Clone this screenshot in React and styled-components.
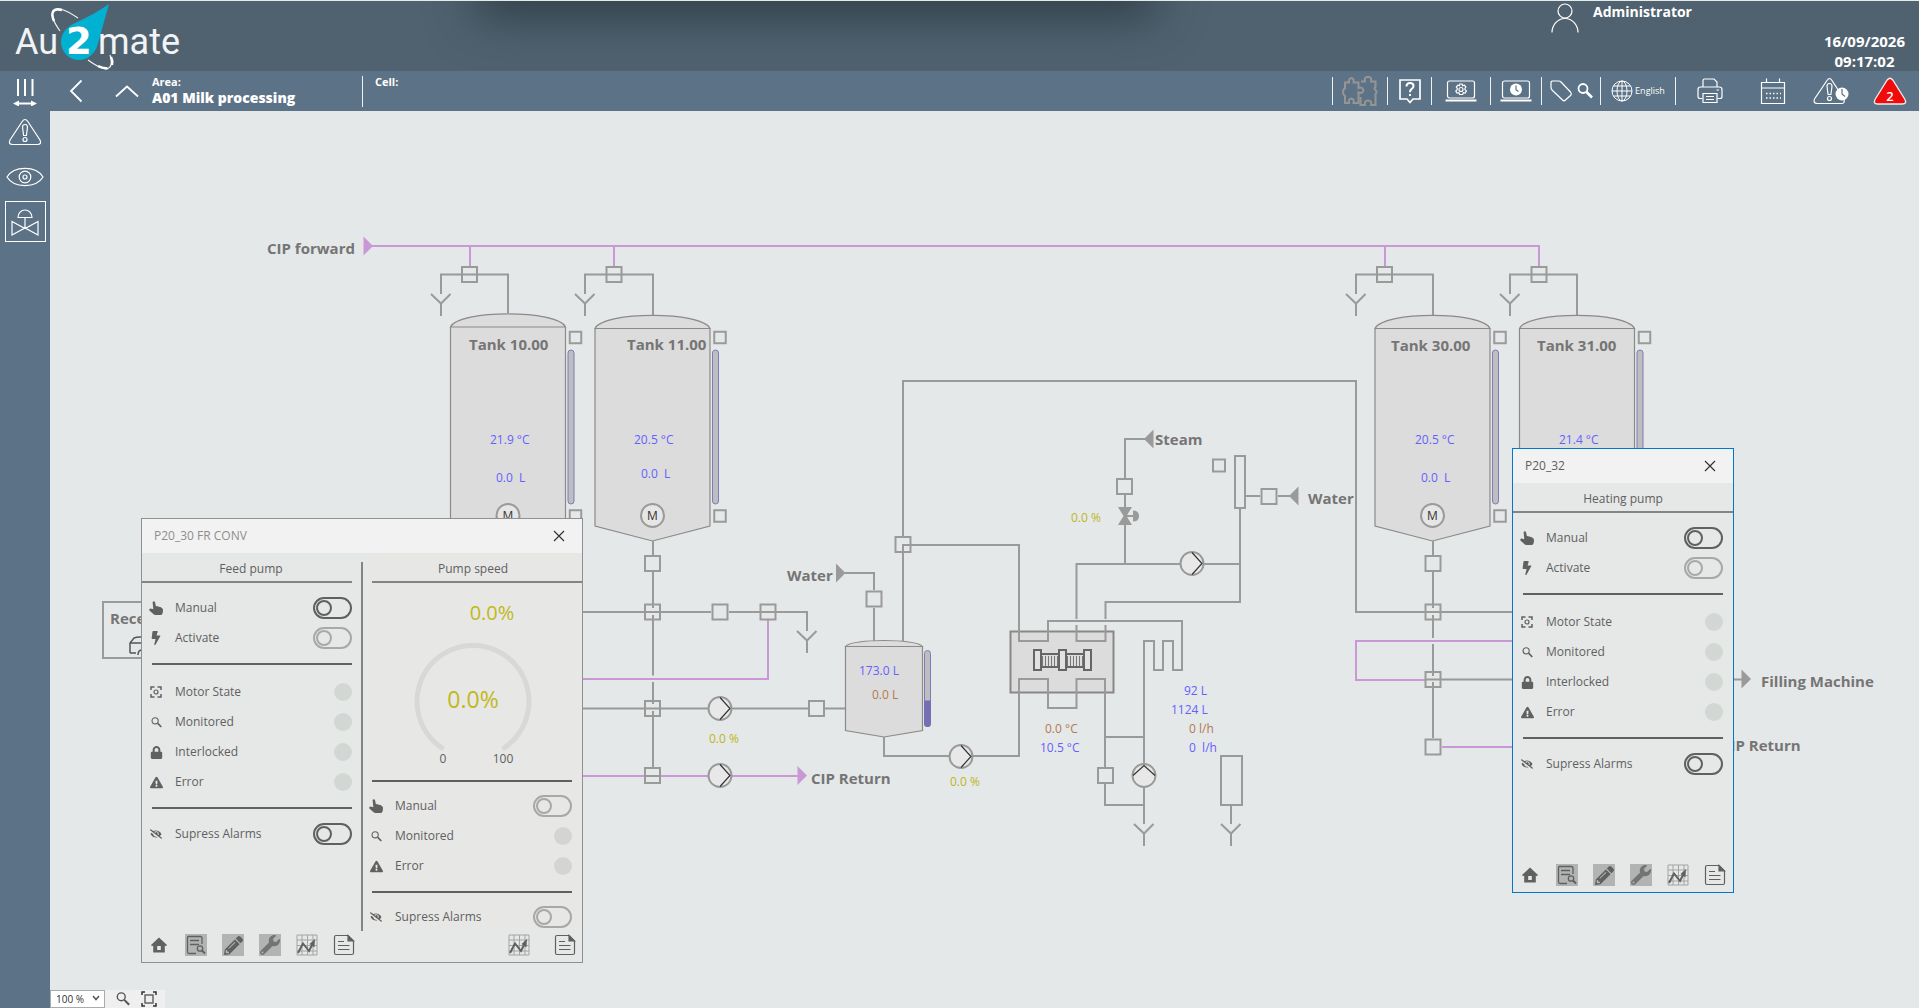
import React from "react";
import styled, { createGlobalStyle } from "styled-components";
import {
  FaBolt,
  FaLock,
  FaExclamationTriangle,
  FaPencilAlt,
  FaWrench,
  FaEyeSlash,
} from "react-icons/fa";

const FONT = '"Open Sans", "Noto Sans", "Liberation Sans", sans-serif';
const C = {
  header: "#50626f",
  bar: "#5c7286",
  canvas: "#e5e8e8",
  panel: "#e6e8e7",
  pipe: "#9a9a9a",
  box: "#9a9b98",
  cip: "#cb98d6",
  vessel: "#dcdcdc",
  edge: "#8a8a8a",
  label: "#757575",
  ink: "#606060",
  faint: "#a8a8a8",
  blue: "#6660ff",
  brown: "#b37a50",
  yellow: "#bdb61c",
};

const Global = createGlobalStyle`
  *, *::before, *::after { box-sizing: border-box; }
  body { margin: 0; font-family: ${FONT}; background: ${C.canvas}; }
  button, select, input { font-family: inherit; margin: 0; }
`;

/* ---------- page frame ---------- */

const Page = styled.div`
  display: grid;
  grid-template-columns: 50px minmax(0, 1fr);
  grid-template-rows: 71px 40px minmax(0, 1fr);
  height: 100vh;
  overflow: hidden;
  background: ${C.bar};
`;

const Header = styled.header`
  grid-column: 1 / -1;
  position: relative;
  display: flex;
  overflow: hidden;
  background: ${C.header};
  border-top: 1px solid #e4ebe9;
  color: #fff;
  font-weight: 700;
  &::before {
    content: "";
    position: absolute;
    left: 25%;
    right: 40%;
    top: -40px;
    height: 40px;
    box-shadow: 0 10px 48px 4px rgba(30, 44, 52, 0.7);
  }
`;

const Logo = styled.svg`
  flex: none;
  position: relative;
  font-weight: 400;
`;

const User = styled.div`
  display: flex;
  align-items: flex-start;
  gap: 14px;
  margin-left: auto;
  padding-right: 132px;
  font-size: 14px;
  line-height: 22px;
  svg {
    margin-top: 2px;
  }
`;

const Clock = styled.time`
  align-self: flex-end;
  padding: 0 14px 0 0;
  text-align: center;
  font-size: 15px;
  line-height: 20px;
  span {
    display: block;
  }
`;

const Bar = styled.div`
  display: flex;
  align-items: stretch;
  color: #fff;
`;

const BareButton = styled.button`
  display: flex;
  align-items: center;
  justify-content: center;
  width: ${(p) => p.$w || 40}px;
  height: ${(p) => (p.$h ? p.$h + "px" : "auto")};
  padding: 0;
  border: 0;
  background: none;
  color: ${(p) => p.$c || "#fff"};
  font-size: 9px;
  line-height: 12px;
  gap: ${(p) => p.$gap || 0}px;
`;

const Crumb = styled.div`
  display: flex;
  flex-direction: column;
  width: ${(p) => p.$w}px;
  padding-top: 3px;
  font-weight: 700;
  small {
    font-size: 11px;
    line-height: 16px;
  }
  strong {
    font-size: 14px;
    line-height: 16px;
  }
`;

const Rule = styled.span`
  width: 1px;
  margin: 6px 0;
  background: #eef2f4;
`;

const CrumbRule = styled(Rule)`
  margin: 5px 12px 4px 0;
`;

const Tools = styled.div`
  display: flex;
  margin-left: auto;
`;

const Side = styled.nav`
  display: flex;
  flex-direction: column;
  align-items: center;
  gap: 4px;
  background: ${C.bar};
`;

const SideButton = styled(BareButton)`
  width: 41px;
  height: 41px;
  border: 1px solid ${(p) => (p.$on ? "#fff" : "transparent")};
`;

const Main = styled.main`
  display: flex;
  flex-direction: column;
  min-width: 0;
  background: ${C.canvas};
`;

const Canvas = styled.section`
  position: relative;
  flex: 1;
  overflow: hidden;
`;

const Drawing = styled.svg`
  position: absolute;
  left: 0;
  top: 0;
`;

const Tag = styled.span`
  position: absolute;
  left: ${(p) => p.$x - 50}px;
  top: ${(p) => p.$y - 111 - 10}px;
  line-height: 20px;
  white-space: pre;
  color: ${(p) => p.$c};
  font-size: ${(p) => p.$s}px;
  font-weight: ${(p) => (p.$b ? 700 : 400)};
`;

const ZoomBar = styled.div`
  display: flex;
  align-items: center;
  gap: 10px;
  align-self: flex-start;
  height: 18px;
  padding-right: 8px;
  background: #efefef;
`;

const ZoomPick = styled.div`
  position: relative;
  display: flex;
  width: 55px;
  height: 18px;
  select {
    width: 100%;
    padding: 0 0 0 5px;
    border: 1px solid #ababab;
    background: #fff;
    color: #333;
    font-size: 10px;
    line-height: 14px;
    appearance: none;
  }
  svg {
    position: absolute;
    right: 5px;
    top: 4px;
    color: #555;
    pointer-events: none;
  }
`;

/* ---------- faceplate windows ---------- */

const Window = styled.section`
  position: absolute;
  left: ${(p) => p.$x - 50}px;
  top: ${(p) => p.$y - 111}px;
  width: ${(p) => p.$w}px;
  display: flex;
  flex-direction: column;
  background: ${C.panel};
  border: 1px solid ${(p) => (p.$active ? "#0078d0" : "#8f908f")};
  color: ${C.ink};
  font-size: 12px;
  line-height: 18px;
`;

const TitleBar = styled.header`
  display: flex;
  align-items: center;
  justify-content: space-between;
  height: 34px;
  padding: 0 12px;
  background: #f2f2f2;
  color: ${(p) => (p.$active ? "#5f5f5f" : "#8e8e8e")};
  h2 {
    margin: 0;
    font-size: 12px;
    font-weight: 400;
  }
`;

const Body = styled.div`
  display: flex;
  height: 379px;
`;

const Column = styled.div`
  flex: ${(p) => (p.$w ? `none` : `1`)};
  width: ${(p) => (p.$w ? p.$w + "px" : "auto")};
  display: flex;
  flex-direction: column;
  background: ${(p) => (p.$warm ? "#e7e7e6" : "transparent")};
`;

const Split = styled.div`
  width: 2px;
  margin: 9px 6px 1px 9px;
  background: #828583;
`;

const Heading = styled.h3`
  flex: none;
  margin: 0 0 0 ${(p) => p.$left || 0}px;
  height: 30px;
  padding: 7px ${(p) => (p.$pull === "left" ? 8 : 0)}px 0 ${(p) => (p.$pull === "right" ? 8 : 0)}px;
  border-bottom: 2px solid #828583;
  text-align: center;
  font-size: 12px;
  font-weight: 400;
`;

const Rows = styled.div`
  flex: none;
  display: flex;
  flex-direction: column;
  margin-right: ${(p) => p.$right || 0}px;
  padding: ${(p) => p.$top || 10}px 0 10px;
  &:last-child {
    padding-bottom: 0;
  }
`;

const Cut = styled.hr`
  flex: none;
  height: 2px;
  margin: 0 ${(p) => p.$right || 0}px 0 ${(p) => p.$left}px;
  border: 0;
  background: ${C.ink};
`;

const Row = styled.label`
  display: grid;
  grid-template-columns: 14px 1fr auto;
  align-items: center;
  column-gap: 12px;
  height: 30px;
  padding-left: ${(p) => p.$left}px;
  & > svg {
    justify-self: center;
  }
`;

const Toggle = styled.input.attrs({ type: "checkbox" })`
  appearance: none;
  position: relative;
  width: 39px;
  height: 22px;
  border: 2px solid currentColor;
  border-radius: 11px;
  color: ${(p) => (p.disabled ? C.faint : C.ink)};
  &::before {
    content: "";
    position: absolute;
    left: 1px;
    top: 1px;
    width: 16px;
    height: 16px;
    border: 2px solid currentColor;
    border-radius: 50%;
  }
`;

const Led = styled.output`
  width: 18px;
  height: 18px;
  border-radius: 50%;
  background: ${(p) => (p.$warm ? "#d4d4d4" : "#d2d7d4")};
`;

const Readout = styled.output`
  flex: none;
  display: flex;
  align-items: center;
  justify-content: center;
  height: 60px;
  padding-left: 33px;
  color: #c0b91a;
  font-size: 20px;
  line-height: 28px;
`;

const GaugeBox = styled.svg`
  flex: none;
  align-self: center;
  margin: 0 5px 10px 0;
`;

const Foot = styled.footer`
  display: flex;
  justify-content: space-between;
  height: 30px;
  padding: 2px 6px 0;
`;

const FootGroup = styled.div`
  display: flex;
  gap: ${(p) => p.$gap}px;
`;

const FootButton = styled.button`
  display: flex;
  align-items: center;
  justify-content: center;
  width: 22px;
  height: 22px;
  padding: 0;
  border: 0;
  background: ${(p) => (p.$shade ? "#b2b4b3" : "none")};
  color: ${(p) => p.$c || C.ink};
`;

/* ---------- icons ---------- */

const Ico = ({ w, h, sw = 1.4, children, ...rest }) => (
  <svg width={w} height={h} viewBox={`0 0 ${w} ${h}`} fill="none" stroke="currentColor" strokeWidth={sw} {...rest}>
    {children}
  </svg>
);

const MenuIcon = () => (
  <Ico w={26} h={30} sw={2}>
    <path d="M6 3v17M13 3v17M20.500 3v17" />
    <path d="M5 27.500h16" />
    <path d="M1 27.500l6-3v6zM25 27.500l-6-3v6z" fill="currentColor" stroke="none" />
  </Ico>
);
const WarnIcon = () => (
  <Ico w={34} h={28} sw={1.2}>
    <path d="M14.200 3.500Q17 -.5 19.800 3.500L32 22Q34 26.500 29.500 26.500H4.500Q0 26.500 2 22Z" />
    <path d="M17 6.500c-2 0-2.700 1.500-2.400 3.500l1 7.500h2.800l1-7.500c.3-2-.4-3.500-2.400-3.500z" />
    <circle cx="17" cy="21.500" r="2" />
  </Ico>
);
const EyeIcon = () => (
  <Ico w={38} h={22} sw={1.2}>
    <path d="M1 11C8 -.5 30 -.5 37 11C30 22.500 8 22.500 1 11Z" />
    <circle cx="19" cy="11" r="5.800" />
    <circle cx="19" cy="11" r="2" />
  </Ico>
);
const ValveIcon = () => (
  <Ico w={28} h={28} sw={1.2}>
    <path d="M7 9.500a7 7.500 0 0 1 14 0zM14 9.500v10M1 13.500v13.500l13-7 13 7V13.500l-13 7z" />
  </Ico>
);
const PersonIcon = () => (
  <Ico w={28} h={30} sw={1.2}>
    <circle cx="14" cy="8" r="7" />
    <path d="M1 29.500a13 14 0 0 1 26 0" />
  </Ico>
);
const PuzzleIcon = () => (
  <Ico w={36} h={30} sw={2} color="#979593">
    <path d="M3 6.500H7q-1-4 2.500-4.500 3 .5 2 4.500h5v5.500q4-1.500 5 2.500-1 3.500-5 2V27h-5q1-4-2-4.500-3.500.5-2.500 4.500H3v-7q-2-1-2-4 0-3 2-3.500z" />
    <path d="M19 5.500h4Q22 1 26 .8 30 1 29 5.500h4.500V11q-2 1.500 0 3 2 2 0 4V29H29q1-4.500-3-4.500T23 29h-4.500v-8" />
  </Ico>
);
const HelpIcon = () => (
  <Ico w={24} h={26} sw={1.700}>
    <path d="M2 2h20v19h-7l-3 3.500L9 21H2z" />
    <path d="M8.500 8.500q0-3.500 3.500-3.500t3.500 3q0 2-2 3.200-1.500 1-1.500 3M12 16v2" strokeWidth="2" />
  </Ico>
);
const LaptopIcon = ({ kind }) => (
  <Ico w={32} h={24} sw={1.200}>
    <rect x="2.500" y="2" width="27" height="17" rx="2" />
    <path d="M.5 21.500h31" strokeWidth="2" />
    {kind === "gear" ? (
      <g>
        <circle cx="16" cy="10.500" r="2" />
        <path d="M14.800 5h2.400l.5 1.700 1.700-.6 1.500 2-1 1.400.2 1.300 1.300 1.200-1.300 2-1.800-.4-.6 1.900h-3.200l-.6-1.900-1.800.4-1.300-2 1.300-1.200.2-1.300-1-1.400 1.500-2 1.700.6z" />
      </g>
    ) : (
      <g>
        <circle cx="16" cy="10.500" r="6" fill="currentColor" stroke="none" />
        <path d="M16 6.500v4.300l2.500 1.700" stroke={C.bar} />
      </g>
    )}
  </Ico>
);
const TagIcon = () => (
  <Ico w={22} h={22} sw={1.200}>
    <path d="M2 1h6.500q1.500 0 2.500 1l9.500 10q1.500 2 0 3.500l-5 4.500q-1.500 1.500-3 0L2.500 10.500Q1 9 1 7.500V2z" />
  </Ico>
);
const LensIcon = ({ s = 16, sw = 1.8 }) => (
  <svg width={s} height={s} viewBox="0 0 16 16" fill="none" stroke="currentColor" strokeWidth={sw}>
    <circle cx="6" cy="5.500" r="4.500" />
    <path d="M9.500 9l5.500 5.500" strokeWidth={sw + 0.8} />
  </svg>
);
const GlobeIcon = () => (
  <Ico w={22} h={22} sw={1}>
    <circle cx="11" cy="11" r="10" />
    <ellipse cx="11" cy="11" rx="5" ry="10" />
    <path d="M11 1v20M1 11h20M2.500 6h17M2.500 16h17" />
  </Ico>
);
const PrinterIcon = () => (
  <Ico w={26} h={26} sw={1.200}>
    <path d="M6 9V2.500Q6 1 7.500 1h9.500l3 3v5M5.500 20.500H3Q1 20.500 1 18.500v-7Q1 9 3.500 9h19Q25 9 25 11.500v7q0 2-2 2h-2.500" />
    <path d="M6 15.500h14v9H6zM9 18.500h8M9 21.500h8M19.500 12h2.500" />
  </Ico>
);
const CalendarIcon = () => (
  <Ico w={26} h={28} sw={1.200}>
    <path d="M1.500 5.500h23v21h-23zM1.500 11h23M6.500 1.500v4M19.500 1.500v4" />
    <path d="M6 16.500h15M6 21h15" strokeDasharray="1.500 2" strokeWidth="1.500" />
  </Ico>
);
const WarnClockIcon = () => (
  <Ico w={36} h={28} sw={1.2}>
    <path d="M14 3.500Q16.500-.5 19 3.500L31 22q1 4.500-2 4.500H4Q0 26.500 1.500 22z" />
    <path d="M16.500 6.500c-2 0-2.700 1.500-2.400 3.500l1 7.500h2.800l1-7.500c.3-2-.4-3.500-2.400-3.500z" />
    <circle cx="16.500" cy="21.500" r="2" />
    <circle cx="29" cy="17" r="6.500" fill="#fff" stroke="none" />
    <path d="M29 12v5l3 2.500" stroke={C.bar} />
  </Ico>
);
const AlarmCountIcon = () => (
  <svg width="34" height="28" viewBox="0 0 34 28">
    <path d="M14.200 3Q17-.5 19.800 3L32 22.500Q34 27 29.500 27H4.500Q0 27 2 22.500Z" fill="#f00a0a" stroke="#e8eef0" strokeWidth="1.300" />
    <text x="17" y="23.500" textAnchor="middle" fill="#fff" fontSize="13" fontWeight="600" fontFamily={FONT}>2</text>
  </svg>
);

const HandIcon = () => (
  <svg width="14" height="14" viewBox="0 0 14 14" fill="currentColor">
    <path d="M3.600.9Q5-.4 6 1l.9 4.300q1.100-.7 1.900.3 1.200-.5 1.900.5 1.300-.3 1.900.8l1.200.9q.5 3-.4 5Q12.900 14 11.500 14H6.500Q5.200 14 4.300 13L.4 9.500Q-.3 8 1.500 7.600l2.800.7z" />
  </svg>
);
const HomeIcon = () => (
  <svg width="16" height="16" viewBox="0 0 16 16" fill="currentColor">
    <path fillRule="evenodd" d="M8 .5L16 8l-1 1.200-1.200-.7V15.500H2.200V8.500L1 9.200 0 8zM6.200 9v4h3.600V9z" />
  </svg>
);
const StateIcon = () => (
  <Ico w={12} h={12} sw={1.5}>
    <path d="M1 4V1h3.500M7.500 1H11v3M11 8v3H7.500M4.500 11H1V8" />
    <circle cx="6" cy="6" r="2" strokeWidth="1.200" />
  </Ico>
);
const ListIcon = () => (
  <Ico w={20} h={20} sw={1.300}>
    <path d="M16 9V3q0-1.500-1.500-1.500h-12Q1.500 1.500 1.500 3v14q0 1.500 1.500 1.500h7M4 5.500h9M4 9.500h9" />
    <circle cx="14" cy="13.500" r="2.700" />
    <path d="M16 15.500l3 3" strokeWidth="2" />
  </Ico>
);
const TrendIcon = () => (
  <Ico w={22} h={22} sw={1}>
    <path d="M1 1h20v20H1zM6 1v20M11.500 1v20M17 1v20M1 6h20M1 11.500h20M1 17h20" stroke="#a2a4a3" />
    <path d="M2 19l5-9.500 6 7.500 4-8" strokeWidth="2" />
    <path d="M19 5l-5.500 5 5 3.500z" fill="currentColor" stroke="none" />
  </Ico>
);
const DocIcon = () => (
  <Ico w={22} h={22} sw={1.200}>
    <path d="M15 1.500H3Q1.500 1.500 1.500 3v16q0 1.500 1.500 1.500h16q1.500 0 1.500-1.500V7z" />
    <path d="M15 1.500V7h5.500z" fill="currentColor" />
    <path d="M5 7.500h6M5 11.500h11.500M5 15.500h11.500" />
  </Ico>
);
const CloseIcon = () => (
  <Ico w={12} h={12} sw={1.200}>
    <path d="M1 1l10 10M11 1L1 11" />
  </Ico>
);

const rowIcons = {
  hand: <HandIcon />,
  bolt: <FaBolt size={14} />,
  state: <StateIcon />,
  lens: <LensIcon s={11} sw={1.6} />,
  lock: <FaLock size={13} />,
  warn: <FaExclamationTriangle size={13} />,
  hide: <FaEyeSlash size={12} />,
};

/* ---------- faceplate parts ---------- */

const Line = ({ icon, text, toggle, off, warm, left = 7 }) => (
  <Row $left={left}>
    {rowIcons[icon]}
    <span>{text}</span>
    {toggle ? <Toggle disabled={off} /> : <Led $warm={warm} />}
  </Row>
);

const MotorColumn = ({ title, right, width, pull }) => (
  <Column $w={width}>
    <Heading $pull={pull}>{title}</Heading>
    <Rows $right={right}>
      <Line icon="hand" text="Manual" toggle />
      <Line icon="bolt" text="Activate" toggle off />
    </Rows>
    <Cut $left={10} $right={right} />
    <Rows $right={right} $top={12}>
      <Line icon="state" text="Motor State" />
      <Line icon="lens" text="Monitored" />
      <Line icon="lock" text="Interlocked" />
      <Line icon="warn" text="Error" />
    </Rows>
    <Cut $left={10} $right={right} />
    <Rows $right={right}>
      <Line icon="hide" text="Supress Alarms" toggle />
    </Rows>
  </Column>
);

const Gauge = () => (
  <GaugeBox width="136" height="127" viewBox="0 0 136 127" fontFamily={FONT}>
    <path d="M38.500 106A56 56 0 1 1 97.500 106" fill="none" stroke="#d7d9d8" strokeWidth="5" />
    <text x="68" y="65" textAnchor="middle" fontSize="23" fill="#c0b91a">0.0%</text>
    <text x="38" y="120" textAnchor="middle" fontSize="12" fill={C.ink}>0</text>
    <text x="98" y="120" textAnchor="middle" fontSize="12" fill={C.ink}>100</text>
  </GaugeBox>
);

const SpeedColumn = () => (
  <Column $warm>
    <Heading $left={3} $pull="left">Pump speed</Heading>
    <Readout>0.0%</Readout>
    <Gauge />
    <Cut $left={3} $right={10} />
    <Rows $right={10} $top={9}>
      <Line icon="hand" text="Manual" toggle off left={0} />
      <Line icon="lens" text="Monitored" warm left={0} />
      <Line icon="warn" text="Error" warm left={0} />
    </Rows>
    <Cut $left={3} $right={10} />
    <Rows $right={10} $top={9}>
      <Line icon="hide" text="Supress Alarms" toggle off left={0} />
    </Rows>
  </Column>
);

const MotorFoot = () => (
  <FootGroup $gap={15}>
    <FootButton aria-label="Home"><HomeIcon /></FootButton>
    <FootButton aria-label="Parameters" $shade><ListIcon /></FootButton>
    <FootButton aria-label="Edit" $shade><FaPencilAlt size={19} /></FootButton>
    <FootButton aria-label="Service" $shade $c="#747474"><FaWrench size={20} /></FootButton>
    <FootButton aria-label="Trend"><TrendIcon /></FootButton>
    <FootButton aria-label="Notes"><DocIcon /></FootButton>
  </FootGroup>
);

const Faceplate = ({ title, active, x, y, w, children, foot }) => (
  <Window $x={x} $y={y} $w={w} $active={active}>
    <TitleBar $active={active}>
      <h2>{title}</h2>
      <BareButton $w={22} $h={22} $c="#333" aria-label="Close">
        <CloseIcon />
      </BareButton>
    </TitleBar>
    <Body>{children}</Body>
    <Foot>
      <MotorFoot />
      {foot}
    </Foot>
  </Window>
);

/* ---------- process drawing ---------- */

const Box = ({ x, y, s = 15 }) => (
  <rect x={x - s / 2} y={y - s / 2} width={s} height={s} fill="none" stroke={C.box} strokeWidth="2" />
);
const Drain = ({ x, y }) => <path d={`M${x - 10} ${y}l10 9.500l9.500 -9.500M${x} ${y + 9}v13`} />;
const Pump = ({ x, y, up }) => (
  <g transform={`translate(${x} ${y})${up ? " rotate(-90)" : ""}`}>
    <circle r="11.500" fill="#e8e8e8" stroke={C.box} strokeWidth="2" />
    <path d="M0 -11L10 0L0 11" stroke="#333" strokeWidth="1.200" />
  </g>
);
const Arrow = ({ x, y, left, color = C.pipe }) => (
  <path d={left ? `M${x} ${y}l9.500 -9.500v19z` : `M${x} ${y}l-9.500 -9.500v19z`} fill={color} stroke="none" />
);
const Level = ({ x, y, h, fill = 0 }) => (
  <g>
    <rect x={x} y={y} width="6" height={h} rx="3" fill="#bebebe" stroke="#7d7bbb" strokeWidth="1" />
    {fill > 0 && <path d={`M${x - 0.5} ${y + h - fill}h7v${fill - 3}q0 3.500 -3.500 3.500t-3.500 -3.500z`} fill="#776fb3" stroke="none" />}
  </g>
);
const Tank = ({ x, rim = 328.5 }) => (
  <g>
    <g fill={C.vessel} stroke={C.edge} strokeWidth="1.200">
      <path d={`M${x} ${rim}V526l57.500 15l57.500 -15V${rim}`} />
      <path d={`M${x} ${rim}c8 -17.500 107 -17.500 115 0z`} />
    </g>
    <Level x={x + 117.5} y={350} h={154} />
    <Box x={x + 125} y={337.5} s={11.5} />
    <Box x={x + 125} y={516} s={11.5} />
    <circle cx={x + 57.5} cy="515.500" r="11.500" fill="#e6e6e6" stroke={C.box} strokeWidth="2" />
    <text x={x + 57.5} y="520" textAnchor="middle" fontSize="12" fill="#333" stroke="none" fontFamily={FONT}>M</text>
  </g>
);
const Plates = ({ x }) => (
  <path d={`M${x} 656v10M${x + 3} 656v10M${x + 6} 656v10M${x + 9} 656v10M${x + 12} 656v10M${x + 15} 656v10`} stroke="#777" strokeWidth="1" />
);

const Scene = () => (
  <Drawing width="1869" height="879" viewBox="50 111 1869 879" fill="none" stroke={C.pipe} strokeWidth="2">
    {/* CIP circuit */}
    <g stroke={C.cip}>
      <path d="M372 246H1540M470 246v20M614 246v20M1385 246v20M1539 246v20" />
      <path d="M583 679H768V620M583 776H708M732 776H799" />
      <path d="M1512 641H1356V680H1425M1442 747H1730" />
      <Arrow x={373} y={246} color={C.cip} />
      <Arrow x={807} y={775.5} color={C.cip} />
    </g>

    {/* tank inlets and drains */}
    <path d="M441 294V274.500H508V313M585 294V274.500H653V315M1356 294V274.500H1433V315M1510 294V274.500H1577V315" />
    <Drain x={441} y={294} />
    <Drain x={585} y={294} />
    <Drain x={1356} y={294} />
    <Drain x={1510} y={294} />
    <Box x={469.5} y={274.5} />
    <Box x={614} y={274.5} />
    <Box x={1384.5} y={274.5} />
    <Box x={1539} y={274.5} />

    <Tank x={450.5} rim={327} />
    <Tank x={595} />
    <Tank x={1375} />
    <Tank x={1519.5} />

    {/* receiving lines */}
    <rect x="103" y="602" width="60" height="56" />
    <path d="M130 653v-10l4-5q2-1 6-1h8M130 643h12M130 653h6M138 655q0-5 4-5" stroke="#555" strokeWidth="1.500" />
    <path d="M653 541v14M653 572v36M653 615v60.500M653 682v22M653 711v56" />
    <path d="M583 612H711M729 612H807V631M583 708.500H708M732 708.500H808M825 708.500H845" />
    <path d="M646 776h14" />
    <Drain x={807} y={631} />
    <Box x={652.5} y={563.5} />
    <Box x={652.5} y={612} />
    <Box x={720} y={612} />
    <Box x={768} y={612} />
    <Box x={652.5} y={708.5} />
    <Box x={652.5} y={775.5} />
    <Box x={816.5} y={708.5} />
    <Pump x={720} y={708.5} />
    <Pump x={720} y={775.5} />

    {/* balance tank */}
    <path d="M845 573H874V590M874 608V641" />
    <Arrow x={845.5} y={573} />
    <Box x={874} y={599} />
    <path d="M903 536V381H1356V612H1512M903 641V545H1019" />
    <Box x={903} y={544.5} />
    <g fill={C.vessel} stroke={C.edge} strokeWidth="1.200">
      <path d="M845.500 646.500V730.500L884 737L922.500 730.500V646.500" />
      <path d="M845.500 646.500c6 -8 71 -8 77 0z" />
    </g>
    <Level x={924.5} y={650.5} h={76} fill={26} />
    <path d="M884 737V756H949M973 756H1019" />
    <Pump x={961} y={756.5} />

    {/* heat exchanger */}
    <rect x="1010.500" y="631.500" width="103" height="61" fill={C.vessel} stroke="#888" />
    <path d="M1019 544V641H1048V621H1182V670H1173V641H1163V670H1154V641H1144V764" />
    <path d="M1019 757V679H1048V708H1076.500V679H1105V767M1105 784V805H1144M1105 737H1144" />
    <path d="M1180 564H1076.500V619M1076.500 625V641H1105.500V625M1105.500 619V602H1240V508M1204 564H1240" />
    <g stroke="#666">
      <path d="M1042 654h17M1067 654h16M1042 667h17M1067 667h16" />
      <rect x="1034" y="650" width="7" height="20" fill="#e2e2e2" />
      <rect x="1059" y="650" width="7" height="20" fill="#e2e2e2" />
      <rect x="1084" y="650" width="7" height="20" fill="#e2e2e2" />
    </g>
    <Plates x={1042.5} />
    <Plates x={1067.5} />
    <Pump x={1192} y={563.5} />
    <Box x={1105.5} y={775.5} />
    <Pump x={1144} y={775.5} up />
    <path d="M1144 787V824" />
    <Drain x={1144} y={824} />
    <rect x="1221" y="756" width="21" height="49" />
    <path d="M1231 806V824" />
    <Drain x={1231} y={824} />

    {/* steam and water supply */}
    <Arrow x={1144} y={439} left />
    <path d="M1146 439H1125V478M1125 495V508M1125 523V564M1125 516h9" />
    <Box x={1124.5} y={486.5} />
    <path d="M1118 507h14l-5.500 9l5.500 9h-14l5.500 -9zM1133 510.500q6 0 6 5.500t-6 5.500z" fill={C.pipe} stroke="none" />
    <Box x={1219} y={465.5} s={12} />
    <rect x="1235" y="456" width="10" height="52" />
    <path d="M1246 496H1260M1278 496H1291" />
    <Box x={1269} y={496.5} />
    <Arrow x={1289} y={496} left />

    {/* filling lines */}
    <path d="M1433 541v14M1433 572v36M1433 615v23M1433 644v32M1433 682v56M1425 679.500H1742" />
    <Box x={1433} y={563.5} />
    <Box x={1433} y={612} />
    <Box x={1433} y={679.5} />
    <Box x={1433} y={747} />
    <Arrow x={1751} y={679} />
  </Drawing>
);

const names = [
  [267, 248, "CIP forward"],
  [811, 778, "CIP Return"],
  [787, 575, "Water"],
  [1155, 439, "Steam"],
  [1308, 498, "Water"],
  [1761, 681, "Filling Machine"],
  [1721, 745, "CIP Return"],
  [110, 618, "Reception"],
  [469, 344, "Tank 10.00"],
  [627, 344, "Tank 11.00"],
  [1391, 345, "Tank 30.00"],
  [1537, 345, "Tank 31.00"],
];
const values = [
  [490, 440, "21.9 °C", C.blue],
  [496, 478, "0.0  L", C.blue],
  [634, 440, "20.5 °C", C.blue],
  [641, 474, "0.0  L", C.blue],
  [1415, 440, "20.5 °C", C.blue],
  [1421, 478, "0.0  L", C.blue],
  [1559, 440, "21.4 °C", C.blue],
  [859, 671, "173.0 L", C.blue],
  [872, 695, "0.0 L", C.brown],
  [709, 739, "0.0 %", C.yellow],
  [950, 782, "0.0 %", C.yellow],
  [1071, 518, "0.0 %", C.yellow],
  [1184, 691, "92 L", C.blue],
  [1171, 710, "1124 L", C.blue],
  [1189, 729, "0 l/h", C.brown],
  [1189, 748, "0  l/h", C.blue],
  [1045, 729, "0.0 °C", C.brown],
  [1040, 748, "10.5 °C", C.blue],
];

export default function App() {
  return (
    <Page>
      <Global />
      <Header>
        <Logo width="190" height="70" viewBox="0 1 190 70" fill="none">
          <path d="M109 4L97.500 45C95 54 87 60 79 60C69 60 61 52 61 42C61 34 66 28 73 24Q95 14 109 4Z" fill="#00b1d1" />
          <path d="M60 31Q50 17 53 11Q57 4 78 18" stroke="#eef2f4" strokeWidth="1.200" />
          <path d="M54 21Q51 14 53.500 11Q56 8.500 62 10" stroke="#fff" strokeWidth="2.500" />
          <path d="M88 60Q100 69 107 69Q114 66 110 55" stroke="#eef2f4" strokeWidth="1.200" />
          <path d="M98 66Q104 69 107.500 68M112 65Q113 61 111 57" stroke="#fff" strokeWidth="2.500" />
          <g fill="#f1f4f6" fontFamily="Roboto, 'Liberation Sans', sans-serif" fontSize="36">
            <text x="15" y="53.500">Au</text>
            <text x="98" y="53.500">mate</text>
          </g>
          <text x="66" y="54" fill="#fff" fontFamily="'DejaVu Sans', sans-serif" fontWeight="700" fontSize="37">2</text>
        </Logo>
        <User>
          <PersonIcon />
          Administrator
        </User>
        <Clock>
          <span>16/09/2026</span>
          <span>09:17:02</span>
        </Clock>
      </Header>

      <BareButton $w={50} aria-label="Menu"><MenuIcon /></BareButton>
      <Bar>
        <BareButton $w={52} aria-label="Back">
          <Ico w={14} h={24} sw={1.8}><path d="M12.500 1.500L2 12l10.500 10.500" /></Ico>
        </BareButton>
        <BareButton $w={50} aria-label="Up">
          <Ico w={24} h={14} sw={1.8}><path d="M1 12.500L12 2.500l11 10" /></Ico>
        </BareButton>
        <Crumb $w={210}>
          <small>Area:</small>
          <strong>A01 Milk processing</strong>
        </Crumb>
        <CrumbRule />
        <Crumb $w={100}>
          <small>Cell:</small>
        </Crumb>
        <Tools>
          <Rule />
          <BareButton $w={54} aria-label="Modules"><PuzzleIcon /></BareButton>
          <Rule />
          <BareButton $w={43} aria-label="Help"><HelpIcon /></BareButton>
          <Rule />
          <BareButton $w={58} aria-label="System settings"><LaptopIcon kind="gear" /></BareButton>
          <Rule />
          <BareButton $w={50} aria-label="System time"><LaptopIcon /></BareButton>
          <Rule />
          <BareButton $w={58} $gap={5} aria-label="Tag search"><TagIcon /><LensIcon /></BareButton>
          <Rule />
          <BareButton $w={74} $gap={2}><GlobeIcon />English</BareButton>
          <Rule />
          <BareButton $w={68} aria-label="Print"><PrinterIcon /></BareButton>
          <BareButton $w={58} aria-label="Calendar"><CalendarIcon /></BareButton>
          <BareButton $w={58} aria-label="Alarm history"><WarnClockIcon /></BareButton>
          <BareButton $w={59} aria-label="Alarms"><AlarmCountIcon /></BareButton>
        </Tools>
      </Bar>

      <Side>
        <SideButton aria-label="Warnings"><WarnIcon /></SideButton>
        <SideButton aria-label="View"><EyeIcon /></SideButton>
        <SideButton $on aria-label="Valves"><ValveIcon /></SideButton>
      </Side>

      <Main>
        <Canvas>
          <Scene />
          {names.map(([x, y, t]) => (
            <Tag key={t + x} $x={x} $y={y} $c={C.label} $s={15} $b>{t}</Tag>
          ))}
          {values.map(([x, y, t, c]) => (
            <Tag key={`${x}-${y}`} $x={x} $y={y} $c={c} $s={12}>{t}</Tag>
          ))}

          <Faceplate
            title="P20_30 FR CONV"
            x={141}
            y={518}
            w={442}
            foot={
              <FootGroup $gap={24}>
                <FootButton aria-label="Speed trend"><TrendIcon /></FootButton>
                <FootButton aria-label="Speed notes"><DocIcon /></FootButton>
              </FootGroup>
            }
          >
            <MotorColumn title="Feed pump" width={210} pull="right" />
            <Split />
            <SpeedColumn />
          </Faceplate>

          <Faceplate title="P20_32" active x={1512} y={448} w={222}>
            <MotorColumn title="Heating pump" right={10} />
          </Faceplate>
        </Canvas>
        <ZoomBar>
          <ZoomPick>
            <select aria-label="Zoom level" defaultValue="100">
              <option value="100">100 %</option>
            </select>
            <Ico w={8} h={8} sw={1.5}><path d="M1 2l3 3.500L7 2" /></Ico>
          </ZoomPick>
          <BareButton $w={16} $c="#555" aria-label="Zoom"><LensIcon s={14} sw={1.6} /></BareButton>
          <BareButton $w={16} $c="#333" aria-label="Fit to window">
            <Ico w={16} h={16} sw={1.5}>
              <path d="M1 4V1h3M12 1h3v3M15 12v3h-3M4 15H1v-3" />
              <rect x="4" y="4" width="8" height="8" stroke="#666" />
            </Ico>
          </BareButton>
        </ZoomBar>
      </Main>
    </Page>
  );
}
